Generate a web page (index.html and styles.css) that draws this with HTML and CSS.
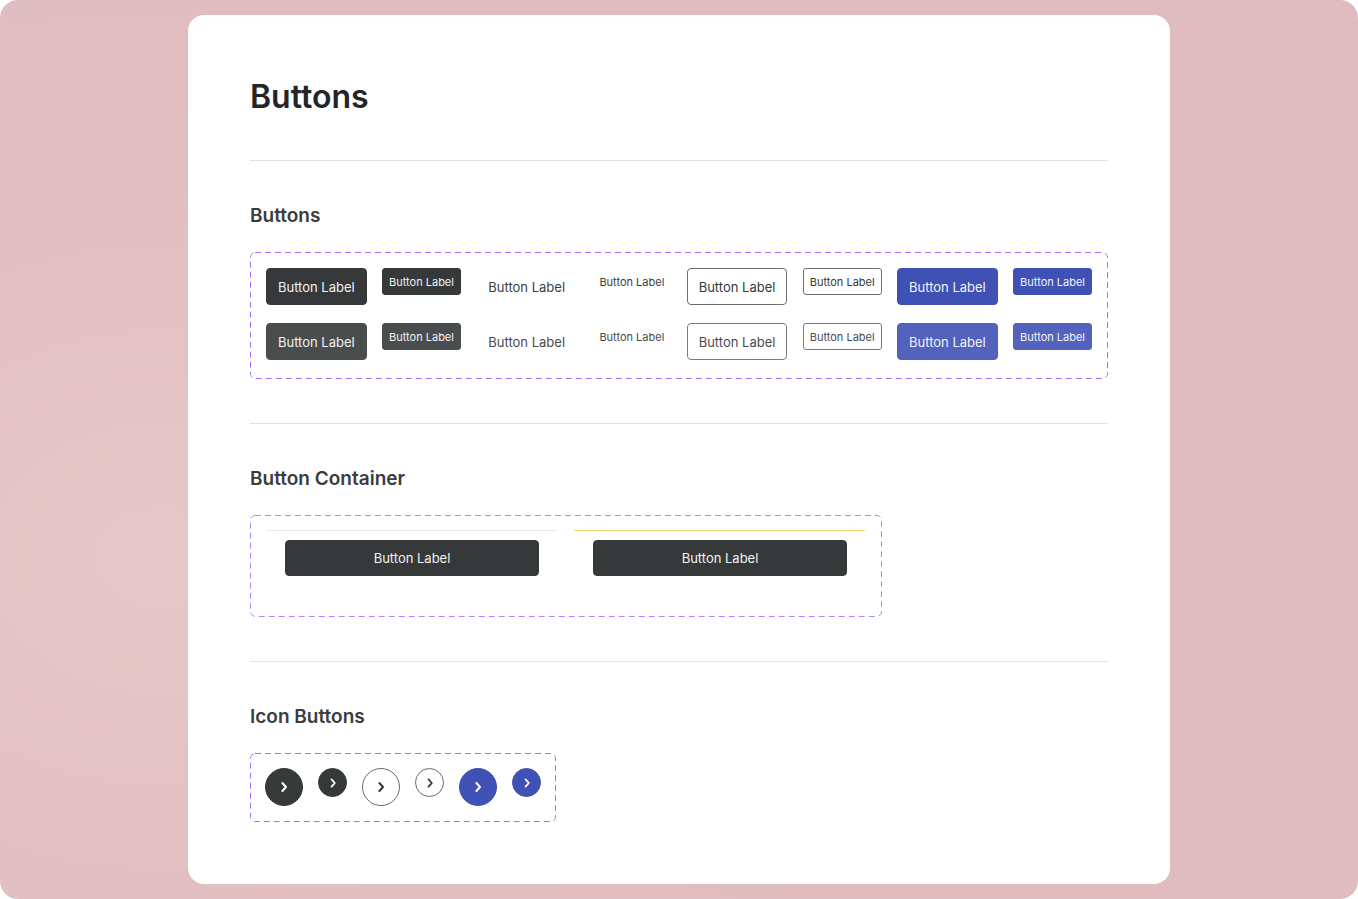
FILE: index.html
```html
<!DOCTYPE html>
<html lang="en">
<head>
<meta charset="utf-8">
<title>Buttons</title>
<link rel="stylesheet" href="styles.css">
</head>
<body>
<div class="frame">
  <main class="card">
    <h1 class="page-title">Buttons</h1>
    <hr class="divider">

    <section class="section">
      <h2 class="section-title">Buttons</h2>
      <div class="variant-box buttons-box">
        <div class="btn-row">
          <button class="btn btn-lg btn-dark">Button Label</button>
          <button class="btn btn-sm btn-dark">Button Label</button>
          <button class="btn btn-lg btn-text">Button Label</button>
          <button class="btn btn-sm btn-text">Button Label</button>
          <button class="btn btn-lg btn-outline">Button Label</button>
          <button class="btn btn-sm btn-outline">Button Label</button>
          <button class="btn btn-lg btn-blue">Button Label</button>
          <button class="btn btn-sm btn-blue">Button Label</button>
        </div>
        <div class="btn-row hover">
          <button class="btn btn-lg btn-dark">Button Label</button>
          <button class="btn btn-sm btn-dark">Button Label</button>
          <button class="btn btn-lg btn-text">Button Label</button>
          <button class="btn btn-sm btn-text">Button Label</button>
          <button class="btn btn-lg btn-outline">Button Label</button>
          <button class="btn btn-sm btn-outline">Button Label</button>
          <button class="btn btn-lg btn-blue">Button Label</button>
          <button class="btn btn-sm btn-blue">Button Label</button>
        </div>
      </div>
    </section>
    <hr class="divider">

    <section class="section">
      <h2 class="section-title">Button Container</h2>
      <div class="variant-box container-box">
        <div class="container-col">
          <button class="btn btn-block btn-dark">Button Label</button>
        </div>
        <div class="container-col accent">
          <button class="btn btn-block btn-dark">Button Label</button>
        </div>
      </div>
    </section>
    <hr class="divider">

    <section class="section">
      <h2 class="section-title">Icon Buttons</h2>
      <div class="variant-box icon-box">
        <button class="icon-btn icon-lg icon-dark"><svg viewBox="0 0 10 10"><path d="M4.2 3 L6 5 L4.2 7"/></svg></button>
        <button class="icon-btn icon-sm icon-dark"><svg viewBox="0 0 10 10"><path d="M4.2 3 L6 5 L4.2 7"/></svg></button>
        <button class="icon-btn icon-lg icon-outline"><svg viewBox="0 0 10 10"><path d="M4.2 3 L6 5 L4.2 7"/></svg></button>
        <button class="icon-btn icon-sm icon-outline"><svg viewBox="0 0 10 10"><path d="M4.2 3 L6 5 L4.2 7"/></svg></button>
        <button class="icon-btn icon-lg icon-blue"><svg viewBox="0 0 10 10"><path d="M4.2 3 L6 5 L4.2 7"/></svg></button>
        <button class="icon-btn icon-sm icon-blue"><svg viewBox="0 0 10 10"><path d="M4.2 3 L6 5 L4.2 7"/></svg></button>
      </div>
    </section>
  </main>
</div>
</body>
</html>
```

FILE: styles.css
```css
* { box-sizing: border-box; }

html, body {
  margin: 0;
  padding: 0;
  background: #ffffff;
}

body {
  font-family: Inter, "Noto Sans", "Liberation Sans", sans-serif;
  color: #2b2d2e;
}

.frame {
  width: 1358px;
  height: 899px;
  border-radius: 18px;
  background: radial-gradient(ellipse 900px 700px at 12% 62%, #e7c7c9 0%, #e2bfc2 45%, #e0bcc0 100%);
  display: flex;
  justify-content: center;
  align-items: flex-start;
  padding-top: 15px;
}

.card {
  width: 982px;
  height: 869px;
  background: #ffffff;
  border-radius: 16px;
  padding: 62px 62px 0;
}

.page-title {
  margin: 0;
  font-size: 32px;
  line-height: 40px;
  font-weight: 600;
  color: #232526;
}

.divider {
  border: 0;
  height: 1px;
  background: #e2e2e2;
  margin: 43px 0 0;
}

.section + .divider {
  margin-top: 44px;
}

.section {
  padding-top: 43px;
}

.section-title {
  margin: 0 0 24px;
  font-size: 19px;
  line-height: 24px;
  font-weight: 600;
  color: #3a3c3d;
}

.variant-box {
  border: 1px solid transparent;
  border-radius: 5px;
  background-origin: border-box;
  background-clip: border-box;
  background-repeat: no-repeat;
}

/* Buttons grid */
.buttons-box {
  height: 127px;
  padding: 15px 15px 18px;
  display: flex;
  flex-direction: column;
  gap: 18px;
  background-image: url("data:image/svg+xml,%3Csvg xmlns='http://www.w3.org/2000/svg' width='858' height='127'%3E%3Crect x='0.5' y='0.5' width='857' height='126' rx='4.5' fill='none' stroke='%23a870f6' stroke-width='1' stroke-dasharray='6 4'/%3E%3C/svg%3E");
}

.btn-row {
  display: flex;
  align-items: flex-start;
  gap: 15.5px;
}

.btn {
  font-family: Inter, "Noto Sans", "Liberation Sans", sans-serif;
  border: 1px solid transparent;
  background: transparent;
  cursor: pointer;
  display: inline-flex;
  align-items: center;
  justify-content: center;
  white-space: nowrap;
  padding: 0;
}

.btn-lg {
  width: 101px;
  height: 37px;
  font-size: 13px;
  border-radius: 4px;
}

.btn-sm {
  width: 79px;
  height: 27px;
  font-size: 11px;
  border-radius: 3px;
}

.btn-dark { background: #36393a; color: #f2f2f2; border-color: #36393a; }
.hover .btn-dark { background: #4a4d4e; border-color: #4a4d4e; }

.btn-text { color: #3b3d3e; }
.hover .btn-text { color: #484a4b; }

.btn-outline { background: #ffffff; color: #36393a; border-color: #6e6e6e; }
.hover .btn-outline { color: #4a4c4d; border-color: #7a7a7a; }

.btn-blue { background: #3f51b5; color: #f2f3fb; border-color: #3f51b5; }
.hover .btn-blue { background: #5262bd; border-color: #5262bd; }

/* Button container */
.container-box {
  width: 632px;
  height: 102px;
  padding: 14px 15px 0;
  display: flex;
  gap: 17px;
  background-image: url("data:image/svg+xml,%3Csvg xmlns='http://www.w3.org/2000/svg' width='632' height='102'%3E%3Crect x='0.5' y='0.5' width='631' height='101' rx='4.5' fill='none' stroke='%23b684f8' stroke-width='1' stroke-dasharray='6 4'/%3E%3C/svg%3E");
}

.container-col {
  width: 291px;
  border-top: 1px solid #e8e8e8;
  padding: 9px 18px 0 19px;
}

.container-col.accent {
  border-top-color: #f8d36f;
}

.btn-block {
  width: 254px;
  height: 36px;
  font-size: 13px;
  border-radius: 4px;
}

/* Icon buttons */
.icon-box {
  width: 306px;
  height: 69px;
  padding: 14px;
  display: flex;
  align-items: flex-start;
  gap: 15px;
  background-image: url("data:image/svg+xml,%3Csvg xmlns='http://www.w3.org/2000/svg' width='306' height='69'%3E%3Crect x='0.5' y='0.5' width='305' height='68' rx='4.5' fill='none' stroke='%23a870f6' stroke-width='1' stroke-dasharray='6 4'/%3E%3C/svg%3E");
}

.icon-btn {
  border-radius: 50%;
  border: 1px solid transparent;
  padding: 0;
  display: inline-flex;
  align-items: center;
  justify-content: center;
  cursor: pointer;
  background: transparent;
}

.icon-btn svg {
  width: 20px;
  height: 20px;
  fill: none;
  stroke-width: 1;
  stroke-linecap: round;
  stroke-linejoin: round;
}

.icon-lg { width: 38px; height: 38px; }
.icon-sm { width: 29px; height: 29px; }
.icon-sm svg { width: 18px; height: 18px; }

.icon-dark { background: #36393a; border-color: #36393a; }
.icon-dark svg { stroke: #ffffff; }

.icon-outline { background: #ffffff; border-color: #6a6a6a; }
.icon-outline svg { stroke: #36393a; }

.icon-blue { background: #3f51b5; border-color: #3f51b5; }
.icon-blue svg { stroke: #ffffff; }
```
